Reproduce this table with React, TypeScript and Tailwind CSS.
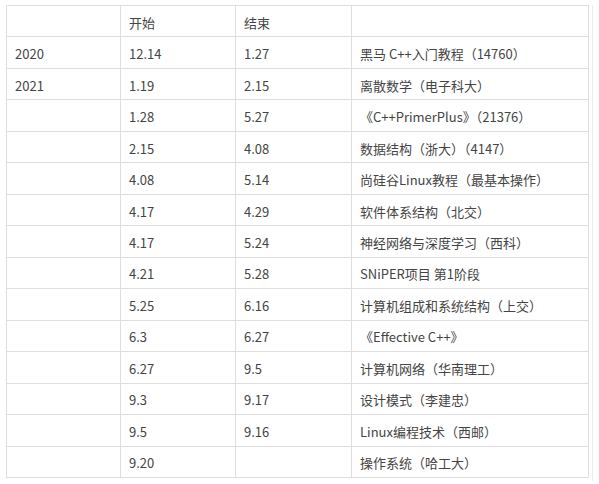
const rows: [string, string, string, string][] = [
  ["", "开始", "结束", ""],
  ["2020", "12.14", "1.27", "黑马 C++入门教程（14760）"],
  ["2021", "1.19", "2.15", "离散数学（电子科大）"],
  ["", "1.28", "5.27", "《C++PrimerPlus》（21376）"],
  ["", "2.15", "4.08", "数据结构（浙大）（4147）"],
  ["", "4.08", "5.14", "尚硅谷Linux教程（最基本操作）"],
  ["", "4.17", "4.29", "软件体系结构（北交）"],
  ["", "4.17", "5.24", "神经网络与深度学习（西科）"],
  ["", "4.21", "5.28", "SNiPER项目 第1阶段"],
  ["", "5.25", "6.16", "计算机组成和系统结构（上交）"],
  ["", "6.3", "6.27", "《Effective C++》"],
  ["", "6.27", "9.5", "计算机网络（华南理工）"],
  ["", "9.3", "9.17", "设计模式（李建忠）"],
  ["", "9.5", "9.16", "Linux编程技术（西邮）"],
  ["", "9.20", "", "操作系统（哈工大）"],
];

export default function App() {
  return (
    <div className="min-h-[484px] w-[599px] bg-white pt-[5px] pl-[6px] font-['Noto_Sans_CJK_SC','Noto_Sans',sans-serif] text-[13px] text-[#444]">
      <div className="w-[587px] border-r border-[#ececec] pb-[3px]">
        <table className="w-[583px] table-fixed border-collapse">
          <colgroup>
            <col className="w-[114px]" />
            <col className="w-[115px]" />
            <col className="w-[116px]" />
            <col />
          </colgroup>
          <tbody>
            {rows.map((r, i) => (
              <tr key={i} className="h-[31.47px]">
                {r.map((c, j) => (
                  <td
                    key={j}
                    className="border border-[#dedede] px-[8px] pt-[2px] align-middle leading-none whitespace-nowrap"
                  >
                    {c}
                  </td>
                ))}
              </tr>
            ))}
          </tbody>
        </table>
      </div>
    </div>
  );
}
